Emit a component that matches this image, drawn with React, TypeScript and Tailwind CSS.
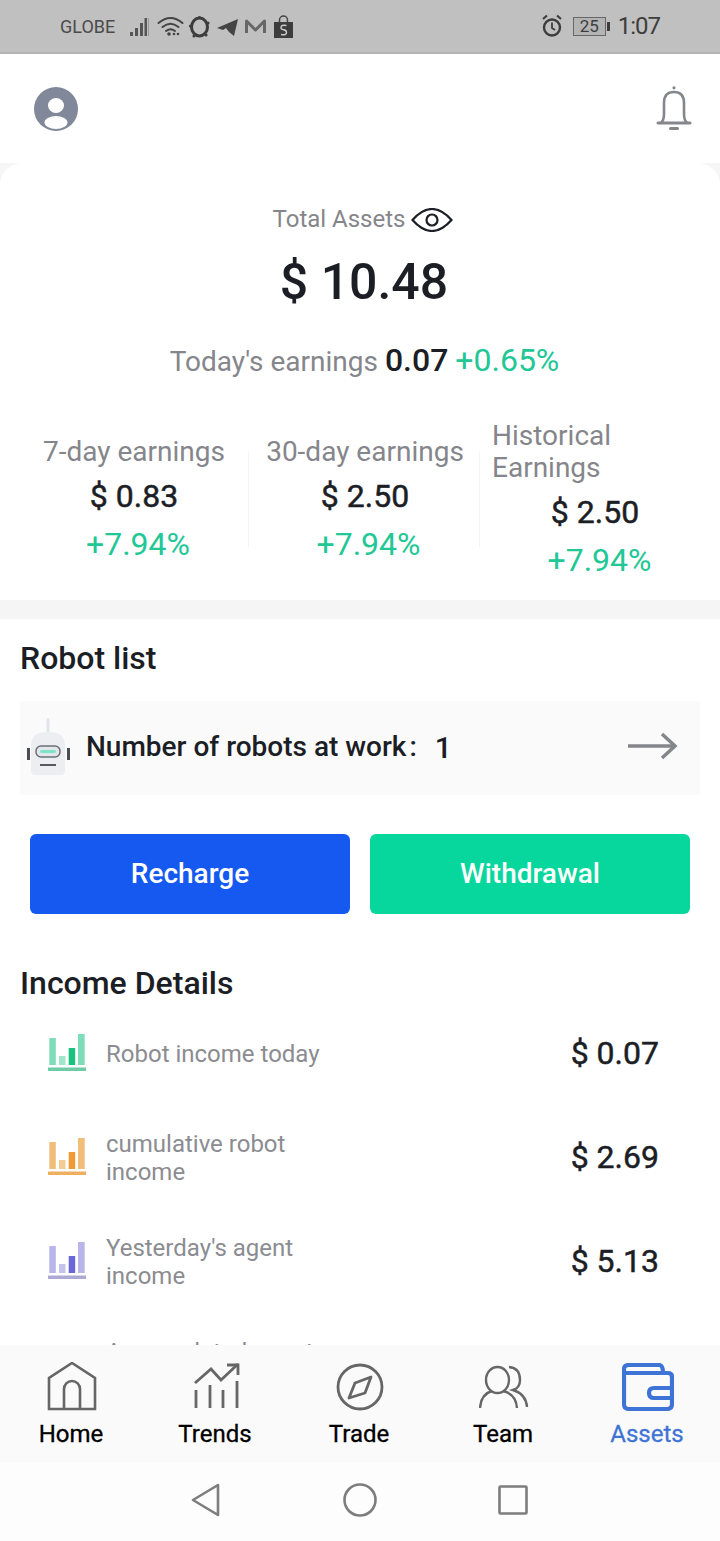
const BarsIcon = ({ light, dark, line, pale }: { light: string; dark: string; line: string; pale: string }) => (
  <svg width="38" height="38" viewBox="0 0 38 38" className="shrink-0">
    <rect x="1.300" y="4" width="6.500" height="27" fill={light} />
    <rect x="11" y="22" width="6.500" height="9" fill={pale} />
    <rect x="20.700" y="14" width="6.500" height="17" fill={dark} />
    <rect x="30" y="0" width="6.700" height="31" fill={light} />
    <rect x="0" y="33.500" width="38" height="3.500" fill={line} />
  </svg>
);

const StatusIcons = () => (
  <svg width="170" height="30" viewBox="0 0 170 30" className="block">
    <g fill="#555">
      <rect x="4" y="21" width="3" height="4" />
      <rect x="9" y="17" width="3" height="8" />
      <rect x="14" y="12" width="3" height="13" />
      <rect x="18.500" y="7" width="2.500" height="18" />
      <rect x="22" y="7" width="1" height="18" fill="#999" />
    </g>
    <g fill="none" stroke="#444" strokeWidth="2" strokeLinecap="round">
      <path d="M32.500 12 Q44.500 2 56.500 12" />
      <path d="M36.500 16 Q44.500 9.500 52.500 16" />
      <path d="M40 20 Q44.500 16.500 49 20" />
    </g>
    <circle cx="43" cy="23" r="1.800" fill="#444" />
    <circle cx="48" cy="23" r="1.300" fill="#444" />
    <circle cx="52" cy="23" r="1.300" fill="#444" />
    <ellipse cx="73.500" cy="16" rx="8" ry="9" fill="none" stroke="#3d3d3d" strokeWidth="3" />
    <g fill="#3d3d3d">
      <circle cx="73.500" cy="6.500" r="1.600" /><circle cx="82" cy="12" r="1.600" /><circle cx="80" cy="24" r="1.600" />
      <circle cx="68" cy="25" r="1.600" /><circle cx="64.500" cy="15" r="1.600" />
    </g>
    <path d="M91 17 L112 8 L108 25 L103 21 L100 17 L97 19 Z" fill="#444" />
    <path d="M120.500 22 V10 L129.500 19 L138.500 10 V22" fill="none" stroke="#666" strokeWidth="3" strokeLinejoin="round" />
    <path d="M153.500 11 V9 a4 4 0 0 1 8 0 V11" fill="none" stroke="#444" strokeWidth="1.500" />
    <rect x="148" y="11" width="19" height="16" fill="#3d3d3d" />
    <path d="M160.500 14.500 Q155 13.500 155 16.500 Q155 18.500 157.500 18.700 Q160.500 19 160.500 21.500 Q160.500 24.500 155 23.500" fill="none" stroke="#ccc" strokeWidth="1.400" />
  </svg>
);

const Alarm = () => (
  <svg width="20" height="24" viewBox="0 0 20 24">
    <circle cx="10" cy="13.500" r="8" fill="none" stroke="#3d3d3d" strokeWidth="2.400" />
    <path d="M10 8.500 V14 L13 16" fill="none" stroke="#3d3d3d" strokeWidth="1.800" />
    <path d="M1 5 L5 1.500 M19 5 L15 1.500" stroke="#3d3d3d" strokeWidth="2.200" />
  </svg>
);

const Divider = () => <div className="absolute right-0 top-[32px] h-[95px] w-px bg-[#f4f4f4]" />;

const Row = ({ label, value, c }: { label: React.ReactNode; value?: string; c: { light: string; dark: string; line: string; pale: string } }) => (
  <div className="h-[104px] flex items-center pl-[48px] pr-[61px] shrink-0">
    <BarsIcon {...c} />
    <div className="ml-[20px] mt-[1px] w-[240px] text-[24px] leading-[28px] text-[#8b8c91]">{label}</div>
    {value && <div className="ml-auto text-[32px] leading-[40px] [-webkit-text-stroke:0.5px_#1c1e26] text-[#1c1e26]">{value}</div>}
  </div>
);

const Tab = ({ label, active, children }: { label: string; active?: boolean; children: React.ReactNode }) => (
  <div className="flex-1 flex flex-col items-center">
    <div className="h-[56px] flex items-center justify-center">{children}</div>
    <div className={`mt-[4px] pr-[2px] text-[24px] leading-[30px] ${active ? "text-[#3e74d6] [-webkit-text-stroke:0.3px_#3e74d6]" : "text-black [-webkit-text-stroke:0.3px_#000]"}`}>{label}</div>
  </div>
);

const Value = ({ cls, children }: { cls: string; children: React.ReactNode }) => (
  <div className={`text-[32px] leading-[44px] [-webkit-text-stroke:0.5px_#1c1e26] text-[#1c1e26] ${cls}`}>{children}</div>
);

const Pct = ({ cls }: { cls: string }) => (
  <div className={`text-[32px] leading-[44px] text-[#21c795] ${cls}`}>+7.94%</div>
);

export default function App() {
  return (
    <div className="w-[720px] h-[1541px] overflow-hidden flex flex-col bg-white font-['Roboto',sans-serif]">
      <div className="h-[54px] shrink-0 bg-[#c0c0c0] border-b-2 border-[#b4b4b4] flex items-center pl-[60px] pr-[60px]">
        <span className="text-[18px] text-[#4b4b4b] mr-[11px]">GLOBE</span>
        <StatusIcons />
        <div className="ml-auto flex items-center text-[#3d3d3d]">
          <Alarm />
          <div className="ml-[11px] w-[33px] h-[19px] border border-[#666] bg-[#b4b4b4] text-[17px] leading-[17px] text-center text-[#3d3d3d]">25</div>
          <div className="w-[3px] h-[9px] ml-[1px] bg-[#3d3d3d]" />
          <span className="ml-[8px] text-[24px] leading-[28px] -tracking-[1px]">1:07</span>
        </div>
      </div>

      <div className="h-[109px] shrink-0 flex items-center justify-between pl-[34px] pr-[27px]">
        <svg width="44" height="44" viewBox="0 0 44 44">
          <circle cx="22" cy="22" r="22" fill="#808899" />
          <ellipse cx="22" cy="18.500" rx="8" ry="7.500" fill="#fff" />
          <ellipse cx="22" cy="35.500" rx="11.500" ry="6.500" fill="#fff" />
        </svg>
        <svg width="38" height="46" viewBox="0 0 38 46" fill="none" stroke="#85868b" strokeWidth="2.600">
          <path d="M3 37 H35" strokeWidth="3" strokeLinecap="round" />
          <path d="M6 37 Q9 34 9 28 V17 Q9 6 19 6 Q29 6 29 17 V28 Q29 34 32 37" />
          <circle cx="19" cy="1.800" r="1.600" fill="#85868b" stroke="none" />
          <path d="M15.500 42.500 H22.500" strokeWidth="3" strokeLinecap="round" />
        </svg>
      </div>

      <div className="flex-1 min-h-0 overflow-hidden bg-[#f6f6f6]">
        <div className="rounded-t-[22px] bg-white flex flex-col h-full">
          <div className="h-[437px] shrink-0 flex flex-col">
            <div className="mt-[38px] h-[36px] pl-[6px] flex items-center justify-center text-[24px] text-[#85868b]">
              Total Assets
              <svg width="42" height="24" viewBox="0 0 42 24" className="ml-[6px] mt-[1px]" fill="none" stroke="#1c1e26" strokeWidth="2.200">
                <path d="M1.500 12 Q21 -10 40.500 12 Q21 34 1.500 12 Z" />
                <circle cx="21" cy="12" r="5.500" />
              </svg>
            </div>
            <div className="mt-[15px] h-[60px] pl-[8px] text-center text-[50px] leading-[60px] font-medium text-[#1c1e26]">$ 10.48</div>
            <div className="mt-[26px] h-[44px] pl-[9px] text-center text-[28px] leading-[44px] text-[#85868b]">
              Today's earnings <span className="text-[32px] font-medium text-[#1c1e26]">0.07</span> <span className="text-[32px] text-[#21c795]">+0.65%</span>
            </div>
            <div className="mt-[38px] flex items-start">
              <div className="relative w-[249px] pt-[14px] shrink-0 flex flex-col items-center pl-[19px]">
                <div className="text-[28px] leading-[36px] text-[#85868b]">7-day earnings</div>
                <Value cls="mt-[4px]">$ 0.83</Value>
                <Pct cls="mt-[4px] ml-[8px]" />
                <Divider />
              </div>
              <div className="relative w-[231px] pt-[14px] shrink-0 flex flex-col items-center pl-[1px]">
                <div className="text-[28px] leading-[36px] text-[#85868b] whitespace-nowrap">30-day earnings</div>
                <Value cls="mt-[4px]">$ 2.50</Value>
                <Pct cls="mt-[4px] ml-[7px]" />
                <Divider />
              </div>
              <div className="flex-1 pl-[12px]">
                <div className="text-[28px] leading-[32px] text-[#85868b]">Historical<br />Earnings</div>
                <div className="w-[206px] flex flex-col items-center">
                  <Value cls="mt-[6px]">$ 2.50</Value>
                  <Pct cls="mt-[4px] ml-[9px]" />
                </div>
              </div>
            </div>
          </div>

          <div className="h-[19px] shrink-0 bg-[#f5f5f5]" />

          <div className="h-[82px] shrink-0 pl-[20px] flex items-center">
            <span className="text-[32px] font-medium text-[#1c1e26] -mt-[4px]">Robot list</span>
          </div>

          <div className="mx-[20px] h-[94px] shrink-0 bg-[#fafafb] flex items-center pl-[6px] pr-[22px]">
            <svg width="44" height="60" viewBox="0 0 44 60" className="-mt-[6px]">
              <rect x="20.500" y="3" width="3" height="16" rx="1.500" fill="#e2e4e8" />
              <path d="M5 30 Q5 17 22 17 Q39 17 39 30 V56 Q39 60 35 60 H9 Q5 60 5 56 Z" fill="#eceef1" />
              <rect x="1" y="33" width="3" height="12" fill="#4a4e54" />
              <rect x="41" y="33" width="3" height="12" fill="#4a4e54" />
              <rect x="10" y="31" width="24" height="11" rx="5" fill="#e2e5e9" stroke="#6b7078" strokeWidth="1.500" />
              <rect x="14" y="35" width="16" height="3" rx="1.500" fill="#7fe3c6" />
              <rect x="14" y="49" width="16" height="2" fill="#55595f" />
            </svg>
            <span className="ml-[16px] -mt-[2px] text-[28px] font-medium text-[#1c1e26]">Number of robots at work</span>
            <span className="ml-[3px] -mt-[2px] text-[28px] font-medium text-[#1c1e26]">:</span>
            <span className="ml-[18px] -mt-[2px] text-[30px] font-medium text-[#1c1e26]">1</span>
            <svg width="50" height="28" viewBox="0 0 50 28" className="ml-auto -mt-[4px]" fill="none" stroke="#85868b" strokeWidth="3.500">
              <path d="M0 14 H46" />
              <path d="M34 2 L47 14 L34 26" />
            </svg>
          </div>

          <div className="mt-[39px] px-[30px] flex gap-[20px] shrink-0">
            <div className="flex-1 h-[80px] rounded-[6px] bg-[#1559f1] text-white text-[28px] font-medium flex items-center justify-center">Recharge</div>
            <div className="flex-1 h-[80px] rounded-[6px] bg-[#07d79d] text-white text-[28px] font-medium flex items-center justify-center">Withdrawal</div>
          </div>

          <div className="mt-[46px] h-[46px] shrink-0 pl-[20px] text-[32px] leading-[46px] font-medium text-[#1c1e26]">Income Details</div>

          <div className="flex-1 min-h-0 overflow-hidden -mt-[5px]">
            <Row label="Robot income today" value="$ 0.07" c={{ light: "#7fdcb9", dark: "#19c27f", line: "#6dcba6", pale: "#9fe6cb" }} />
            <Row label={<>cumulative robot<br />income</>} value="$ 2.69" c={{ light: "#f0bd7a", dark: "#f09a35", line: "#eeb060", pale: "#f3cd96" }} />
            <Row label={<>Yesterday's agent<br />income</>} value="$ 5.13" c={{ light: "#b8b6e8", dark: "#6a68d6", line: "#aca9d4", pale: "#c5c3ee" }} />
            <Row label={<>Accumulated agent<br />&nbsp;</>} c={{ light: "#7fdcb9", dark: "#19c27f", line: "#6dcba6", pale: "#9fe6cb" }} />
          </div>

          <div className="h-[117px] shrink-0 bg-[#fafafa] flex pt-[14px] px-0">
            <Tab label="Home">
              <svg width="50" height="50" viewBox="0 0 50 50" fill="none" stroke="#666" strokeWidth="2.600">
                <path d="M2 47 V16 L25 1 L48 16 V47 Z" strokeLinejoin="miter" />
                <path d="M17 47 V27 a8 8 0 0 1 16 0 V47" />
              </svg>
            </Tab>
            <Tab label="Trends">
              <svg width="50" height="50" viewBox="0 0 50 50" fill="none" stroke="#666" strokeWidth="2.800">
                <path d="M4 21 L20 7 L30 18 L47 2" />
                <path d="M36 3 H47 V13" />
                <path d="M5 28 V46 M19 23 V46 M32 28 V46 M46 19 V46" />
              </svg>
            </Tab>
            <Tab label="Trade">
              <svg width="48" height="48" viewBox="0 0 48 48" fill="none" stroke="#666" strokeWidth="2.800">
                <circle cx="24" cy="24" r="22" />
                <path d="M35 14 L29 30 L13 35 L19 20 Z" strokeLinejoin="round" />
              </svg>
            </Tab>
            <Tab label="Team">
              <svg width="50" height="46" viewBox="0 0 50 46" fill="none" stroke="#666" strokeWidth="2.400">
                <ellipse cx="18.500" cy="16" rx="11.500" ry="13" />
                <path d="M1 44 Q2 30 13 27 M24 27 Q37 30 38 44" />
                <path d="M30 3 Q41 4 41 16 Q41 24 34 26 Q47 30 48 43" />
              </svg>
            </Tab>
            <Tab label="Assets" active>
              <svg width="52" height="48" viewBox="0 0 52 48" fill="none" stroke="#3e74d6" strokeWidth="4.200">
                <path d="M2 12 V6 Q2 2 7 2 H37 Q41 2 41 10 H46 Q50 10 50 14 V41 Q50 46 45 46 H7 Q2 46 2 41 Z" strokeLinejoin="round" />
                <path d="M2 10 H46" />
                <path d="M50 25 H32 Q27 25 27 30 Q27 35 32 35 H50" />
              </svg>
            </Tab>
          </div>

          <div className="h-[79px] shrink-0 bg-[#fdfdfd] flex items-center justify-center pb-[3px] pr-[3px]">
            <svg width="32" height="34" viewBox="0 0 32 34" fill="none" stroke="#7d7d7d" strokeWidth="2.600" className="mr-[121px]">
              <path d="M28 2 V32 L3 17 Z" strokeLinejoin="round" />
            </svg>
            <svg width="34" height="34" viewBox="0 0 34 34" fill="none" stroke="#7d7d7d" strokeWidth="2.600" className="mr-[121px]">
              <circle cx="17" cy="17" r="15.500" />
            </svg>
            <svg width="30" height="30" viewBox="0 0 30 30" fill="none" stroke="#7d7d7d" strokeWidth="2.600">
              <rect x="1.500" y="1.500" width="27" height="27" rx="1" />
            </svg>
          </div>
        </div>
      </div>
    </div>
  );
}
